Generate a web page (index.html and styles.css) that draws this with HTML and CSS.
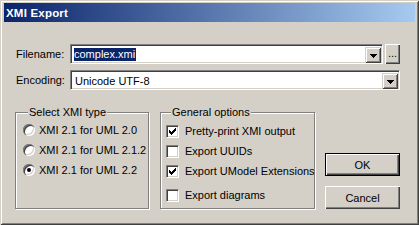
FILE: index.html
```html
<!DOCTYPE html>
<html>
<head>
<meta charset="utf-8">
<title>XMI Export</title>
<link rel="stylesheet" href="styles.css">
</head>
<body>
<div class="window">
  <div class="titlebar"><span class="title">XMI Export</span></div>
  <div class="content">
    <div class="row row-file">
      <span class="lbl">Filename:</span>
      <div class="combo">
        <div class="field"><span class="sel">complex.xmi</span></div>
        <div class="arrow-btn"><svg width="7" height="4" viewBox="0 0 7 4" shape-rendering="crispEdges"><rect x="0" y="0" width="7" height="1"/><rect x="1" y="1" width="5" height="1"/><rect x="2" y="2" width="3" height="1"/><rect x="3" y="3" width="1" height="1"/></svg></div>
      </div>
      <div class="btn btn-browse">...</div>
    </div>
    <div class="row row-enc">
      <span class="lbl">Encoding:</span>
      <div class="combo">
        <div class="field"><span class="val">Unicode UTF-8</span></div>
        <div class="arrow-btn"><svg width="7" height="4" viewBox="0 0 7 4" shape-rendering="crispEdges"><rect x="0" y="0" width="7" height="1"/><rect x="1" y="1" width="5" height="1"/><rect x="2" y="2" width="3" height="1"/><rect x="3" y="3" width="1" height="1"/></svg></div>
      </div>
    </div>
    <div class="bottom">
      <fieldset class="group group-type">
        <legend>Select XMI type</legend>
        <div class="opt"><span class="radio"></span><span>XMI 2.1 for UML 2.0</span></div>
        <div class="opt"><span class="radio"></span><span>XMI 2.1 for UML 2.1.2</span></div>
        <div class="opt"><span class="radio on"><span class="dot"></span></span><span>XMI 2.1 for UML 2.2</span></div>
      </fieldset>
      <fieldset class="group group-opts">
        <legend>General options</legend>
        <div class="opt"><span class="check"><svg width="7" height="7" viewBox="0 0 7 7" shape-rendering="crispEdges"><rect x="0" y="2" width="1" height="3"/><rect x="1" y="3" width="1" height="3"/><rect x="2" y="4" width="1" height="3"/><rect x="3" y="3" width="1" height="3"/><rect x="4" y="2" width="1" height="3"/><rect x="5" y="1" width="1" height="3"/><rect x="6" y="0" width="1" height="3"/></svg></span><span>Pretty-print XMI output</span></div>
        <div class="opt"><span class="check"></span><span>Export UUIDs</span></div>
        <div class="opt"><span class="check"><svg width="7" height="7" viewBox="0 0 7 7" shape-rendering="crispEdges"><rect x="0" y="2" width="1" height="3"/><rect x="1" y="3" width="1" height="3"/><rect x="2" y="4" width="1" height="3"/><rect x="3" y="3" width="1" height="3"/><rect x="4" y="2" width="1" height="3"/><rect x="5" y="1" width="1" height="3"/><rect x="6" y="0" width="1" height="3"/></svg></span><span>Export UModel Extensions</span></div>
        <div class="opt opt-last"><span class="check"></span><span>Export diagrams</span></div>
      </fieldset>
      <div class="buttons">
        <div class="btn btn-default"><span class="btn-in">OK</span></div>
        <div class="btn btn-cancel"><span class="btn-in">Cancel</span></div>
      </div>
    </div>
  </div>
</div>
</body>
</html>
```
FILE: styles.css
```css
* { box-sizing: border-box; }
html, body { margin: 0; padding: 0; background: #d4d0c8; }
body {
  font-family: "Liberation Sans", Arial, sans-serif;
  font-size: 11px;
  color: #000;
}
.window {
  width: 419px;
  height: 225px;
  background: #d4d0c8;
  padding: 3px 4px 4px 4px;
  box-shadow: inset 1px 1px 0 #d4d0c8, inset -1px -1px 0 #404040, inset 2px 2px 0 #fff, inset -2px -2px 0 #808080;
  display: flex;
  flex-direction: column;
  overflow: hidden;
}
.titlebar {
  height: 19px;
  background: linear-gradient(to right, #0a246a, #a6caf0);
  display: flex;
  align-items: center;
  padding-left: 2px;
  flex: none;
}
.title {
  color: #fff;
  font-weight: bold;
  font-size: 11.5px;
  letter-spacing: 0.2px;
}
.content {
  padding: 0 15px 0 11px;
  display: flex;
  flex-direction: column;
}
.row {
  display: flex;
  align-items: center;
  height: 20px;
}
.row-file { margin-top: 22px; }
.row-enc { margin-top: 6px; }
.lbl {
  width: 55px;
  padding-left: 1px;
  flex: none;
}
.combo {
  flex: 1;
  height: 20px;
  display: flex;
  background: #fff;
  border: 1px solid;
  border-color: #808080 #fff #fff #808080;
  box-shadow: inset 1px 1px 0 #404040, inset -1px -1px 0 #d4d0c8;
  padding: 2px 1px 1px 2px;
}
.field {
  flex: 1;
  display: flex;
  align-items: center;
  padding-left: 1px;
  overflow: hidden;
  white-space: nowrap;
}
.sel {
  background: #0a246a;
  color: #fff;
  line-height: 13px;
  padding: 0 1px 0 0;
}
.val { padding-left: 1px; }
.arrow-btn {
  width: 16px;
  height: 16px;
  flex: none;
  background: #d4d0c8;
  box-shadow: inset 1px 1px 0 #d4d0c8, inset -1px -1px 0 #404040, inset 2px 2px 0 #fff, inset -2px -2px 0 #808080;
  display: flex;
  align-items: center;
  justify-content: center;
}
.arrow-btn svg { display: block; fill: #000; margin-top: 1px; }
.btn {
  background: #d4d0c8;
  box-shadow: inset 1px 1px 0 #fff, inset -1px -1px 0 #404040, inset -2px -2px 0 #808080;
  display: flex;
  align-items: center;
  justify-content: center;
  flex: none;
}
.btn-browse {
  width: 15px;
  height: 20px;
  margin-left: 2px;
  align-items: flex-end;
  padding-bottom: 5px;
  line-height: 1;
}
.bottom {
  display: flex;
  margin-top: 16px;
  height: 104px;
}
.group {
  margin: 0;
  padding: 0 0 0 7px;
  border: 1px solid #808080;
  box-shadow: 1px 1px 0 #fff, inset 1px 1px 0 #fff;
  height: 103px;
  min-width: 0;
}
.group legend {
  margin-left: 5px;
  padding: 0 1px;
  line-height: 13px;
  background: #d4d0c8;
}
.group-type { width: 134px; }
.group-opts { width: 155px; margin-left: 11px; padding-left: 5px; }
.opt {
  display: flex;
  align-items: center;
  height: 20px;
  white-space: nowrap;
}
.group-type .opt:first-of-type { margin-top: 1px; }
.group-opts .opt:first-of-type { margin-top: 2px; }
.opt-last { margin-top: 4px; }
.radio {
  width: 12px;
  height: 12px;
  border-radius: 50%;
  background: #fff;
  box-shadow: inset 1px 1px 0 #808080, inset 2px 2px 0 #404040, inset -1px -1px 0 #fff, inset -2px -2px 0 #d4d0c8;
  margin-right: 4px;
  flex: none;
  display: flex;
  align-items: center;
  justify-content: center;
}
.dot {
  width: 4px;
  height: 4px;
  border-radius: 50%;
  background: #000;
}
.check {
  width: 13px;
  height: 13px;
  background: #fff;
  border: 1px solid;
  border-color: #808080 #fff #fff #808080;
  box-shadow: inset 1px 1px 0 #404040, inset -1px -1px 0 #d4d0c8;
  margin-right: 6px;
  flex: none;
  display: flex;
  align-items: center;
  justify-content: center;
}
.check svg { display: block; fill: #000; }
.buttons {
  width: 75px;
  margin-left: 10px;
  display: flex;
  flex-direction: column;
  justify-content: flex-end;
  gap: 10px;
  padding-bottom: 1px;
}
.buttons .btn { height: 23px; width: 75px; }
.btn-default {
  border: 1px solid #000;
  box-shadow: inset 1px 1px 0 #fff, inset -1px -1px 0 #404040, inset -2px -2px 0 #808080;
}
```
